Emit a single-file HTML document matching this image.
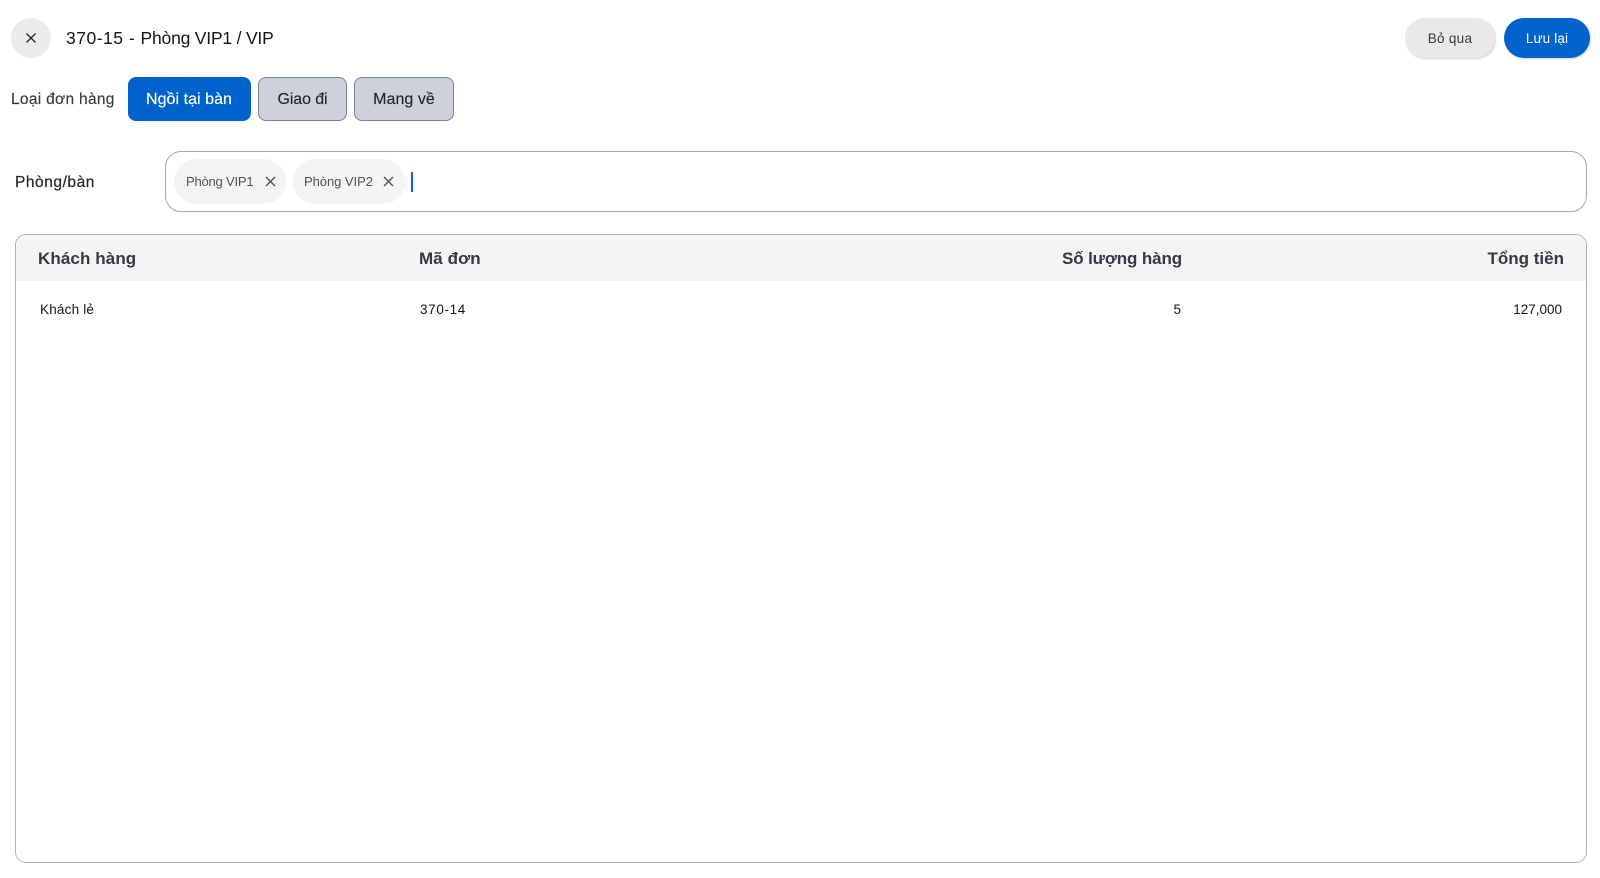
<!DOCTYPE html>
<html lang="vi">
<head>
<meta charset="utf-8">
<title>370-15 - Phòng VIP1 / VIP</title>
<style>
html,body{margin:0;padding:0;background:#fff;width:1600px;height:878px;overflow:hidden}
body{font-family:"Liberation Sans","DejaVu Sans",sans-serif;position:relative;color:#21272a}
.a{position:absolute;white-space:nowrap}
.c{display:flex;align-items:center;justify-content:center;box-sizing:border-box}
.seg{top:77px;height:44px;padding-top:1px;border-radius:8px;font-size:16px;color:#21272a;background:#cdd1dc;border:1.5px solid #7c828c;-webkit-text-stroke:.15px currentColor}
.chip{top:159px;height:45px;border-radius:23px;background:#f4f4f4}
.th{top:249px;line-height:20px;font-size:17px;font-weight:bold;color:#343a3f}
.td{top:301px;line-height:18px;font-size:13.5px;color:#121619}
svg{display:block}
</style>
</head>
<body>
<div class="a c" style="left:11px;top:18px;width:40px;height:40px;border-radius:50%;background:#ebebeb">
<svg width="14" height="14" viewBox="0 0 14 14"><path d="M2.5 2.5L11.5 11.5M11.5 2.5L2.5 11.5" stroke="#21272a" stroke-width="1.3" fill="none"/></svg>
</div>
<div class="a" style="left:66px;top:28px;line-height:20px;font-size:17.5px;color:#121619;letter-spacing:-.2px"><span style="letter-spacing:.5px">370-15 - </span>Phòng VIP1 / VIP</div>

<div class="a c" style="left:1405px;top:18px;width:90px;height:40px;border-radius:20px;background:#e9e9e9;box-shadow:1px 1px 2px rgba(0,0,0,.18);font-size:13.5px;color:#343a3f;letter-spacing:.3px">Bỏ qua</div>
<div class="a c" style="left:1504px;top:18px;width:86px;height:40px;border-radius:20px;background:#0063cc;box-shadow:1px 1px 2px rgba(0,0,0,.18);font-size:13.5px;color:#fff;letter-spacing:.15px">Lưu lại</div>

<div class="a" style="left:11px;top:90px;line-height:20px;font-size:15.5px;color:#343a3f;letter-spacing:.3px;-webkit-text-stroke:.15px #343a3f">Loại đơn hàng</div>
<div class="a c seg" style="left:127.5px;width:123px;background:#0063cc;border-color:#0063cc;color:#fff;letter-spacing:.05px">Ngồi tại bàn</div>
<div class="a c seg" style="left:258px;width:89px;letter-spacing:-.1px">Giao đi</div>
<div class="a c seg" style="left:354px;width:100px;letter-spacing:.05px">Mang về</div>

<div class="a" style="left:15px;top:173px;line-height:20px;font-size:15.5px;color:#21272a;letter-spacing:.55px;-webkit-text-stroke:.2px #21272a">Phòng/bàn</div>
<div class="a" style="left:165px;top:151px;width:1422px;height:61px;box-sizing:border-box;border:1px solid #a2a9b0;border-radius:16px"></div>

<div class="a chip" style="left:174px;width:112px"></div>
<div class="a" style="left:186px;top:173px;line-height:17px;font-size:13px;color:#4d5358;letter-spacing:-.2px">Phòng VIP1</div>
<svg class="a" style="left:265px;top:176px" width="11" height="11" viewBox="0 0 11 11"><path d="M1 1L10 10M10 1L1 10" stroke="#4d5358" stroke-width="1.4" fill="none"/></svg>

<div class="a chip" style="left:293px;width:112px"></div>
<div class="a" style="left:304px;top:173px;line-height:17px;font-size:13px;color:#4d5358;letter-spacing:-.05px">Phòng VIP2</div>
<svg class="a" style="left:383px;top:176px" width="11" height="11" viewBox="0 0 11 11"><path d="M1 1L10 10M10 1L1 10" stroke="#4d5358" stroke-width="1.4" fill="none"/></svg>

<div class="a" style="left:411px;top:172px;width:2px;height:20px;background:#0f62d6"></div>

<div class="a" style="left:15px;top:234px;width:1572px;height:629px;box-sizing:border-box;border:1.5px solid #adb3bd;border-radius:11px;overflow:hidden">
<div style="height:46px;background:#f4f4f4"></div>
</div>

<div class="a th" style="left:38px;letter-spacing:.1px">Khách hàng</div>
<div class="a th" style="left:419px;letter-spacing:.1px">Mã đơn</div>
<div class="a th" style="right:418px;letter-spacing:-.13px">Số lượng hàng</div>
<div class="a th" style="right:36px">Tổng tiền</div>

<div class="a td" style="left:40px;letter-spacing:.2px">Khách lẻ</div>
<div class="a td" style="left:420px;letter-spacing:.65px">370-14</div>
<div class="a td" style="right:419px">5</div>
<div class="a td" style="right:38px;letter-spacing:0">127,000</div>
</body>
</html>
